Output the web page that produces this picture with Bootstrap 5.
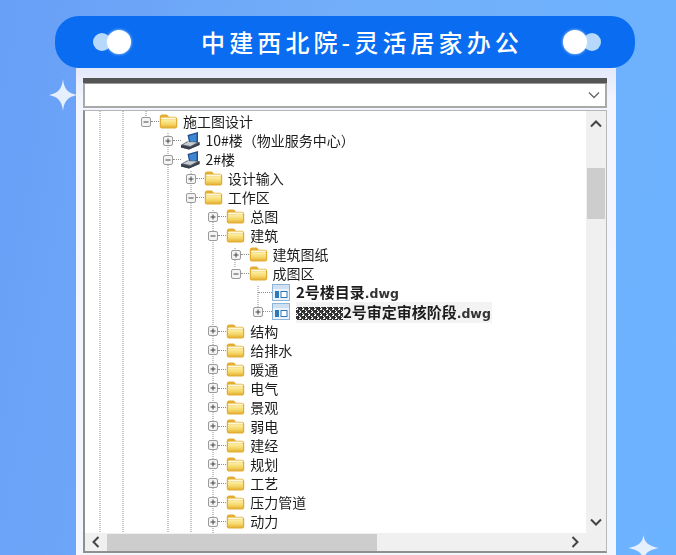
<!DOCTYPE html>
<html lang="zh">
<head>
<meta charset="utf-8">
<title>中建西北院-灵活居家办公</title>
<link href="https://cdn.jsdelivr.net/npm/bootstrap@5.3.0/dist/css/bootstrap.min.css" rel="stylesheet">
<style>
html,body{height:100%;margin:0;overflow:hidden}
body{background:linear-gradient(100deg,#689ff7 0%,#72aef9 45%,#6cb3ff 100%);font-family:"Noto Sans CJK SC","Liberation Sans",sans-serif}
.stage{position:relative;width:676px;height:555px;overflow:hidden;padding-top:16px}
.head-pill{position:relative;z-index:2;width:580px;height:52px;margin-left:55px;border-radius:24px;background:#0a6cf0;color:#fff;padding:0 34px 0 38px}
.head-title{font-size:24px;font-weight:500;letter-spacing:4.1px;line-height:52px;white-space:nowrap;margin-left:30px}
.dots{position:relative;width:38px;height:25px;flex:none}
.dot-big,.dot-small{position:absolute;border-radius:50%;display:block}
.dot-big{width:24px;height:24px;background:#fff;box-shadow:0 0 3px #cfe6ff;top:0}
.dot-small{width:18px;height:18px;background:#b5d8fb;top:3px}
.dots-l .dot-big{left:14px}.dots-l .dot-small{left:0}
.dots-r .dot-big{left:0}.dots-r .dot-small{left:20px}
.spark{position:absolute;z-index:1}
.spark-a{left:49px;top:79px}
.spark-b{left:628px;top:533px}
.sheet{width:540px;height:487px;margin-left:76px;padding:10px 9px 0 7px;background:linear-gradient(#e3e8fa,#f2f5fd 30px,#f4f6fd)}
.win-top{height:5px;background:#555}
.combo{height:25px;background:#fff;border:2px solid #a9a9a9;border-top:1px solid #999;padding-right:1px}
.combo-arrow{width:20px}
.tree-frame{margin-top:2px;height:443px;background:#fff;border-left:2px solid #8f8f8f;border-right:1px solid #b9b9b9;border-bottom:2px solid #8f8f8f;border-top:1px solid #b5b5b5}
.tree-top{height:423px}
.tree-body{position:relative;flex:1;overflow:hidden;padding-top:1px;filter:blur(.4px)}
.guides{position:absolute;left:0;top:0}
.guides line{stroke:#8d8d8d;stroke-width:1;stroke-dasharray:1 1}
.node{position:relative;height:19.05px;white-space:nowrap;font-size:14px;line-height:19px;color:#1c1c1c}
.n0{padding-left:56px}.n1{padding-left:78.4px}.n2{padding-left:100.8px}.n3{padding-left:123.2px}.n4{padding-left:145.6px}.n5{padding-left:168px}
.exp{flex:none;width:10px;height:10px}
.conn{flex:none;width:8px;height:0;border-top:1px dotted #8d8d8d}
.conn-long{width:14px;margin-left:5px}
.conn-file{width:9px}
.ico{flex:none;width:19px;height:15px;margin-right:5px}
.pc-ico{height:18px}
.file-ico{flex:none;width:18px;height:17px;margin-right:6px}
.leaf{font-weight:700;font-size:15px;color:#1c1c1c;letter-spacing:-.02px}
.leaf-ext{font-family:"DejaVu Sans",sans-serif;font-size:12.5px;font-weight:700;color:#333}
.picked{background:#f3f3f3;padding-right:1px}
.mosaic{display:inline-block;width:47px;height:13px;vertical-align:-2px;background:repeating-conic-gradient(rgba(30,30,30,.85) 0 25%,transparent 0 50%) 0 0/6px 6px,repeating-conic-gradient(#444 0 25%,#fff 0 50%) 1px 1px/3px 3px}
.vbar{width:20px;background:#f0f0f0}
.vthumb{width:18px;height:51px;background:#cdcdcd;margin:40px auto 0}
.hbar{height:18px;background:#f0f0f0}
.hthumb{width:270px;height:17px;background:#cdcdcd;margin-left:7px}
.hcorner{width:20px;flex:none;background:#f0f0f0}
.sb-arrow{display:block}
.arrow-up{margin:9px auto 0}
.arrow-down{margin:auto auto 7px}
.arrow-left{flex:none;margin-left:7px}
.arrow-right{margin-left:auto;margin-right:7px}
</style>
</head>
<body>
<svg width="0" height="0" class="d-block" aria-hidden="true">
<defs>
<linearGradient id="fg" x1="0" y1="0" x2="0" y2="1"><stop offset="0" stop-color="#fdf0a8"/><stop offset=".6" stop-color="#f5d768"/><stop offset="1" stop-color="#e6b63c"/></linearGradient>
<symbol id="plus" viewBox="0 0 10 10"><rect x=".5" y=".5" width="9" height="9" rx="1.500" fill="#f4f4f4" stroke="#9a9a9a"/><path d="M2.500 5h5M5 2.500v5" stroke="#444"/></symbol>
<symbol id="minus" viewBox="0 0 10 10"><rect x=".5" y=".5" width="9" height="9" rx="1.500" fill="#f4f4f4" stroke="#9a9a9a"/><path d="M2.500 5h5" stroke="#444"/></symbol>
<symbol id="folder" viewBox="0 0 19 15"><path d="M.8 12.500V3C.8 1.600 1.800.6 3.200.6h3.600c1.100 0 1.700.5 2.300 1.400.3.500.7.7 1.400.7h5.300c1.400 0 2.400 1 2.400 2.400v7.400c0 1.100-.8 1.900-1.900 1.900H2.700C1.600 14.400.8 13.600.8 12.500z" fill="#e3ad32"/><path d="M2 4.500c0-.5.400-.9.900-.9h13.200c.5 0 .9.400.9.900v1H2z" fill="#fff8d8"/><rect x="2" y="5.500" width="15" height="7.700" rx="1" fill="url(#fg)"/></symbol>
<symbol id="pc" viewBox="0 0 19 18"><path d="M6.500 3L17 0v10.500L8.500 12.500z" fill="#244f8c"/><path d="M8 4l7.500-2.300v7.600L9.600 11z" fill="#3d87d2"/><path d="M0 13l6-3.500 12.500.5v3L8 17.500 0 15.500z" fill="#5f6672"/><path d="M2 12.600l5-2.600 9 .5-6.500 3.500z" fill="#c9ced4"/><path d="M0 13l9 2.200 9.500-5v2.800L8 17.500 0 15.500z" fill="#39404c"/></symbol>
<symbol id="doc" viewBox="0 0 18 17"><rect x=".5" y=".5" width="17" height="16" fill="#eaf2fb" stroke="#8fb4da"/><rect x="1" y="1" width="16" height="4" fill="#cfe0f2"/><rect x="3" y="7" width="4" height="7" fill="#2f78b8"/><rect x="9" y="7.500" width="6" height="6" fill="#fff" stroke="#2f78b8"/></symbol>
</defs>
</svg>
<div class="stage">
  <svg class="spark spark-a" width="28" height="32" viewBox="0 0 28 32"><path d="M14 0c1 9 4 14 14 16-10 2-13 7-14 16-1-9-4-14-14-16C10 14 13 9 14 0z" fill="#e6effd"/></svg>
  <svg class="spark spark-b" width="31" height="30" viewBox="0 0 31 30"><path d="M15.500 2c1 8 5 11 15.500 13-10.500 2-14.500 5-15.500 13-1-8-5-11-15.500-13C10.500 13 14.500 10 15.500 2z" fill="#e6effd"/></svg>

  <div class="head-pill d-flex align-items-center justify-content-between">
    <div class="dots dots-l"><span class="dot-small"></span><span class="dot-big"></span></div>
    <div class="head-title">中建西北院-灵活居家办公</div>
    <div class="dots dots-r"><span class="dot-small"></span><span class="dot-big"></span></div>
  </div>

  <div class="sheet">
    <div class="win-top"></div>
    <div class="combo d-flex justify-content-end align-items-center">
      <div class="combo-arrow d-flex justify-content-center"><svg width="12" height="8" viewBox="0 0 12 8"><path d="M1 1.500l5 5 5-5" fill="none" stroke="#666" stroke-width="1.300"/></svg></div>
    </div>
    <div class="tree-frame d-flex flex-column">
      <div class="tree-top d-flex">
        <div class="tree-body">
          <svg class="guides" width="500" height="423">
            <line x1="15" y1="0" x2="15" y2="423"/>
            <line x1="38" y1="0" x2="38" y2="423"/>
            <line x1="61" y1="0" x2="61" y2="6"/>
            <line x1="83" y1="22" x2="83" y2="423"/>
            <line x1="106" y1="60" x2="106" y2="423"/>
            <line x1="128" y1="99" x2="128" y2="423"/>
            <line x1="150" y1="137" x2="150" y2="156"/>
            <line x1="173" y1="175" x2="173" y2="200"/>
          </svg>
          <div class="node n0 d-flex align-items-center"><svg class="exp"><use href="#minus"/></svg><i class="conn"></i><svg class="ico"><use href="#folder"/></svg><span>施工图设计</span></div>
          <div class="node n1 d-flex align-items-center"><svg class="exp"><use href="#plus"/></svg><i class="conn"></i><svg class="ico pc-ico"><use href="#pc"/></svg><span>10#楼（物业服务中心）</span></div>
          <div class="node n1 d-flex align-items-center"><svg class="exp"><use href="#minus"/></svg><i class="conn"></i><svg class="ico pc-ico"><use href="#pc"/></svg><span>2#楼</span></div>
          <div class="node n2 d-flex align-items-center"><svg class="exp"><use href="#plus"/></svg><i class="conn"></i><svg class="ico"><use href="#folder"/></svg><span>设计输入</span></div>
          <div class="node n2 d-flex align-items-center"><svg class="exp"><use href="#minus"/></svg><i class="conn"></i><svg class="ico"><use href="#folder"/></svg><span>工作区</span></div>
          <div class="node n3 d-flex align-items-center"><svg class="exp"><use href="#plus"/></svg><i class="conn"></i><svg class="ico"><use href="#folder"/></svg><span>总图</span></div>
          <div class="node n3 d-flex align-items-center"><svg class="exp"><use href="#minus"/></svg><i class="conn"></i><svg class="ico"><use href="#folder"/></svg><span>建筑</span></div>
          <div class="node n4 d-flex align-items-center"><svg class="exp"><use href="#plus"/></svg><i class="conn"></i><svg class="ico"><use href="#folder"/></svg><span>建筑图纸</span></div>
          <div class="node n4 d-flex align-items-center"><svg class="exp"><use href="#minus"/></svg><i class="conn"></i><svg class="ico"><use href="#folder"/></svg><span>成图区</span></div>
          <div class="node n5 d-flex align-items-center"><i class="conn conn-long"></i><svg class="file-ico"><use href="#doc"/></svg><span class="leaf">2号楼目录<span class="leaf-ext">.dwg</span></span></div>
          <div class="node n5 d-flex align-items-center"><svg class="exp"><use href="#plus"/></svg><i class="conn conn-file"></i><svg class="file-ico"><use href="#doc"/></svg><span class="leaf picked"><span class="mosaic"></span>2号审定审核阶段<span class="leaf-ext">.dwg</span></span></div>
          <div class="node n3 d-flex align-items-center"><svg class="exp"><use href="#plus"/></svg><i class="conn"></i><svg class="ico"><use href="#folder"/></svg><span>结构</span></div>
          <div class="node n3 d-flex align-items-center"><svg class="exp"><use href="#plus"/></svg><i class="conn"></i><svg class="ico"><use href="#folder"/></svg><span>给排水</span></div>
          <div class="node n3 d-flex align-items-center"><svg class="exp"><use href="#plus"/></svg><i class="conn"></i><svg class="ico"><use href="#folder"/></svg><span>暖通</span></div>
          <div class="node n3 d-flex align-items-center"><svg class="exp"><use href="#plus"/></svg><i class="conn"></i><svg class="ico"><use href="#folder"/></svg><span>电气</span></div>
          <div class="node n3 d-flex align-items-center"><svg class="exp"><use href="#plus"/></svg><i class="conn"></i><svg class="ico"><use href="#folder"/></svg><span>景观</span></div>
          <div class="node n3 d-flex align-items-center"><svg class="exp"><use href="#plus"/></svg><i class="conn"></i><svg class="ico"><use href="#folder"/></svg><span>弱电</span></div>
          <div class="node n3 d-flex align-items-center"><svg class="exp"><use href="#plus"/></svg><i class="conn"></i><svg class="ico"><use href="#folder"/></svg><span>建经</span></div>
          <div class="node n3 d-flex align-items-center"><svg class="exp"><use href="#plus"/></svg><i class="conn"></i><svg class="ico"><use href="#folder"/></svg><span>规划</span></div>
          <div class="node n3 d-flex align-items-center"><svg class="exp"><use href="#plus"/></svg><i class="conn"></i><svg class="ico"><use href="#folder"/></svg><span>工艺</span></div>
          <div class="node n3 d-flex align-items-center"><svg class="exp"><use href="#plus"/></svg><i class="conn"></i><svg class="ico"><use href="#folder"/></svg><span>压力管道</span></div>
          <div class="node n3 d-flex align-items-center"><svg class="exp"><use href="#plus"/></svg><i class="conn"></i><svg class="ico"><use href="#folder"/></svg><span>动力</span></div>
        </div>
        <div class="vbar d-flex flex-column">
          <svg class="sb-arrow arrow-up" width="12" height="8" viewBox="0 0 12 8"><path d="M1 6.500l5-5 5 5" fill="none" stroke="#444" stroke-width="2"/></svg>
          <div class="vthumb"></div>
          <svg class="sb-arrow arrow-down" width="12" height="8" viewBox="0 0 12 8"><path d="M1 1.500l5 5 5-5" fill="none" stroke="#444" stroke-width="2"/></svg>
        </div>
      </div>
      <div class="hbar d-flex align-items-center">
        <div class="d-flex flex-grow-1 align-items-center">
          <svg class="sb-arrow arrow-left" width="8" height="12" viewBox="0 0 8 12"><path d="M6.500 1l-5 5 5 5" fill="none" stroke="#444" stroke-width="2"/></svg>
          <div class="hthumb"></div>
          <svg class="sb-arrow arrow-right" width="8" height="12" viewBox="0 0 8 12"><path d="M1.500 1l5 5-5 5" fill="none" stroke="#444" stroke-width="2"/></svg>
        </div>
        <div class="hcorner"></div>
      </div>
    </div>
  </div>
</div>
</body>
</html>
